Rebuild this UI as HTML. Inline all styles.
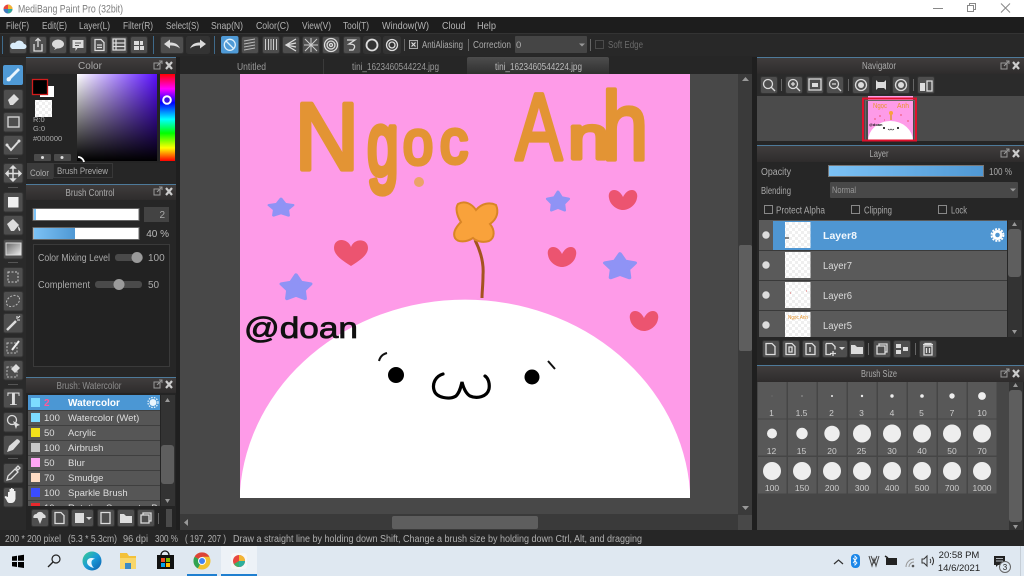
<!DOCTYPE html>
<html><head><meta charset="utf-8"><title>MediBang Paint Pro (32bit)</title>
<style>
html,body{margin:0;padding:0;background:#262626;width:1024px;height:576px;overflow:hidden}
svg{display:block}
text{font-family:"Liberation Sans",sans-serif;font-size:10.5px;fill:#b4b4b4}
.b{fill:#4e4e4e;stroke:#333;stroke-width:1}
.i{fill:#dcdcdc}
.s{fill:none;stroke:#dcdcdc;stroke-width:1.3}
.sep{fill:#555}
.t{fill:#a8a8a8;font-size:10px}
.h{fill:#aaa;font-size:10px;text-anchor:middle}
.n{font-size:9.5px;fill:#ddd}
.l{font-size:8.5px;fill:#ccc;text-anchor:middle}
.w{fill:#f0f0f0}
.st{font-size:10px;fill:#b0b0b0}
.tb{font-size:10px;fill:#222}
.art{font-size:100px;fill:#e39434;stroke:#e39434;stroke-width:7;stroke-linejoin:round;stroke-linecap:round}
.thin{stroke-width:4.5}
</style></head><body>
<svg width="1024" height="576" viewBox="0 0 1024 576" xmlns="http://www.w3.org/2000/svg">
<defs>
<linearGradient id="hd" x1="0" y1="0" x2="0" y2="1"><stop offset="0" stop-color="#403d3d"/><stop offset="1" stop-color="#2e2c2c"/></linearGradient>
<linearGradient id="tab" x1="0" y1="0" x2="0" y2="1"><stop offset="0" stop-color="#4d4d4d"/><stop offset="1" stop-color="#303030"/></linearGradient>
<linearGradient id="blue" x1="0" y1="0" x2="1" y2="0"><stop offset="0" stop-color="#7cc2f5"/><stop offset="1" stop-color="#4f98d4"/></linearGradient>
<linearGradient id="sq1" x1="0" y1="0" x2="1" y2="0"><stop offset="0" stop-color="#fff"/><stop offset="1" stop-color="#5a10ff"/></linearGradient>
<linearGradient id="sq2" x1="0" y1="0" x2="0" y2="1"><stop offset="0" stop-color="#000" stop-opacity="0"/><stop offset="1" stop-color="#000"/></linearGradient>
<linearGradient id="hue" x1="0" y1="0" x2="0" y2="1"><stop offset="0" stop-color="#f00"/><stop offset=".17" stop-color="#f0f"/><stop offset=".33" stop-color="#00f"/><stop offset=".52" stop-color="#0ff"/><stop offset=".68" stop-color="#0f0"/><stop offset=".85" stop-color="#ff0"/><stop offset="1" stop-color="#f00"/></linearGradient>
<linearGradient id="edge" x1="0" y1="0" x2="1" y2="1"><stop offset="0" stop-color="#3ccf8e"/><stop offset=".5" stop-color="#1a9bd8"/><stop offset="1" stop-color="#0c5cab"/></linearGradient>
<linearGradient id="grad" x1="0" y1="0" x2="1" y2="1"><stop offset="0" stop-color="#666"/><stop offset="1" stop-color="#eee"/></linearGradient>
<pattern id="chk" width="6" height="6" patternUnits="userSpaceOnUse"><rect width="3" height="3" fill="#efefef"/><rect x="3" y="3" width="3" height="3" fill="#efefef"/></pattern>
<polygon id="star" points="0,-10 3.200,-4.400 9.500,-3.100 5.200,1.700 5.900,8.100 0,5.500 -5.900,8.100 -5.200,1.700 -9.500,-3.100 -3.200,-4.400" fill="#8f93f5" stroke="#8f93f5" stroke-width="2.500" stroke-linejoin="round"/>
<path id="heart" d="M0 -3C-2 -7 -5 -10 -9 -10C-13 -10 -15 -6 -14 -2C-13 5 -6 10 0 10C6 10 13 5 14 -2C15 -6 13 -10 9 -10C5 -10 2 -7 0 -3Z" fill="#ec5470"/>
<g id="pi"><rect x="0" y="2" width="6" height="6" fill="none" stroke="#999"/><path d="M3 5L8 0M5 0h3v3" fill="none" stroke="#999"/><path d="M12 1l6 7M18 1l-6 7" stroke="#ccc" stroke-width="2.200"/></g>
<clipPath id="rowclip"><rect x="28" y="395" width="132" height="111"/></clipPath>
</defs>

<!-- base -->
<rect width="1024" height="576" fill="#262626"/>

<!-- title bar -->
<rect width="1024" height="17" fill="#fff"/>
<circle cx="8" cy="9" r="4.500" fill="#e8473f"/><path d="M8 4.500a4.500 4.500 0 0 1 4.500 4.500H8z" fill="#f2b632"/><path d="M8 9h4.500A4.500 4.500 0 0 1 8 13.500z" fill="#2fa8a0"/><path d="M8 9v4.500A4.500 4.500 0 0 1 3.500 9z" fill="#3b7bc0"/>
<text x="18" y="12.500" textLength="105" lengthAdjust="spacingAndGlyphs" style="font-size:11px;fill:#7d7d7d">MediBang Paint Pro (32bit)</text>
<path d="M933 8.500h10" stroke="#888"/><rect x="967.500" y="5.500" width="6" height="6" fill="none" stroke="#888"/><path d="M969.500 5.500v-2h6v6h-2" fill="none" stroke="#888"/><path d="M1001 3.500l9 9M1010 3.500l-9 9" stroke="#888"/>

<!-- menu -->
<rect y="17" width="1024" height="16" fill="#1d1d1d"/>
<text x="6" y="29" textLength="23" lengthAdjust="spacingAndGlyphs">File(F)</text><text x="42" y="29" textLength="25" lengthAdjust="spacingAndGlyphs">Edit(E)</text><text x="79" y="29" textLength="31" lengthAdjust="spacingAndGlyphs">Layer(L)</text><text x="123" y="29" textLength="30" lengthAdjust="spacingAndGlyphs">Filter(R)</text><text x="166" y="29" textLength="33" lengthAdjust="spacingAndGlyphs">Select(S)</text><text x="211" y="29" textLength="32" lengthAdjust="spacingAndGlyphs">Snap(N)</text><text x="256" y="29" textLength="33" lengthAdjust="spacingAndGlyphs">Color(C)</text><text x="302" y="29" textLength="29" lengthAdjust="spacingAndGlyphs">View(V)</text><text x="343" y="29" textLength="26" lengthAdjust="spacingAndGlyphs">Tool(T)</text><text x="382" y="29" textLength="47" lengthAdjust="spacingAndGlyphs">Window(W)</text><text x="442" y="29" textLength="23.500" lengthAdjust="spacingAndGlyphs">Cloud</text><text x="477" y="29" textLength="19" lengthAdjust="spacingAndGlyphs">Help</text>

<!-- toolbar -->
<rect y="33" width="1024" height="23" fill="#282828"/>
<rect y="33" width="1024" height="1" fill="#333"/>
<rect x="2" y="36" width="1" height="18" fill="#3f6a8a"/>
<rect class="b" x="9.500" y="36.500" width="17" height="17" rx="2"/><path d="M12 49h12a2.500 2.500 0 0 0 0-5 5 5 0 0 0-9-1 3 3 0 0 0-3 6z" fill="#d9ecfa"/>
<rect class="b" x="29.500" y="36.500" width="17" height="17" rx="2"/><path d="M34 44v7h8v-7M38 47v-8M35.500 41l2.500-2.500 2.500 2.500" class="s"/>
<rect class="b" x="49.500" y="36.500" width="17" height="17" rx="2"/><ellipse cx="58" cy="44" rx="6" ry="4.500" class="i"/><path d="M56 47l-2 3 4-2z" class="i"/>
<rect class="b" x="69.500" y="36.500" width="17" height="17" rx="2"/><path d="M72.500 40h11v8h-6l-2 3v-3h-3z" class="i"/><path d="M75 43h6M75 45.500h4" stroke="#555"/>
<rect class="b" x="90.500" y="36.500" width="17" height="17" rx="2"/><path d="M95 39.500h6l3 3v8h-9zM97 45h5M97 47.500h5" class="s"/>
<rect class="b" x="110.500" y="36.500" width="17" height="17" rx="2"/><path d="M113 39h12v11h-12zM113 43h12M113 46.500h12M116 39v11" class="s"/>
<rect class="b" x="130.500" y="36.500" width="17" height="17" rx="2"/><path d="M134 41h5v4h-5zM140 41h3v4h-3zM134 46h5v4h-5zM140 46h4v4h-4z" class="i"/>
<rect x="153" y="36" width="1" height="18" fill="#3f6a8a"/>
<rect class="b" x="160.500" y="36.500" width="23" height="17" rx="2"/><path d="M164 44l6-4.500v3c4 0 8 1 10 6-3-2.500-6-3-10-3v3z" class="i"/>
<rect class="b" x="186.500" y="36.500" width="23" height="17" rx="2" style="fill:#333"/><path d="M206 44l-6-4.500v3c-4 0-8 1-10 6 3-2.500 6-3 10-3v3z" class="i"/>
<rect x="214" y="36" width="1" height="18" fill="#3f6a8a"/>
<rect x="221" y="36" width="17.500" height="17.500" rx="2" fill="#4f9ad6"/><circle cx="229.800" cy="44.800" r="5.500" fill="none" stroke="#dff0fb" stroke-width="1.300"/><path d="M226 41l8 8" stroke="#dff0fb" stroke-width="1.300"/>
<rect class="b" x="241.500" y="36.500" width="17" height="17" rx="2"/><path d="M244 41l11-2M244 44l11-2M244 47l11-2M244 50l11-2" stroke="#bbb"/>
<rect class="b" x="262.500" y="36.500" width="17" height="17" rx="2"/><path d="M265.500 39v11M268.500 39v11M271 39v11M273.500 39v11M276.500 39v11" stroke="#ccc"/>
<rect class="b" x="282.500" y="36.500" width="17" height="17" rx="2"/><path d="M296 39l-10 6 10 6M296 43l-10 2 10 2" class="s"/>
<rect class="b" x="302.500" y="36.500" width="17" height="17" rx="2"/><path d="M305 39l12 12M317 39l-12 12M311 38v14M304 45h14" stroke="#ccc"/>
<rect class="b" x="322.500" y="36.500" width="17" height="17" rx="2"/><circle cx="331" cy="45" r="6.500" class="s"/><circle cx="331" cy="45" r="4" class="s"/><circle cx="331" cy="45" r="1.500" class="s"/>
<rect class="b" x="343.500" y="36.500" width="17" height="17" rx="2"/><path d="M347 40h8l-6 4c4 0 8 1 4 6h-4" class="s"/>
<rect class="b" x="363.500" y="36.500" width="17" height="17" rx="2" style="fill:#333"/><circle cx="372" cy="45" r="5.500" fill="none" stroke="#ddd" stroke-width="1.800"/>
<rect class="b" x="383.500" y="36.500" width="17" height="17" rx="2" style="fill:#333"/><circle cx="392" cy="45" r="5.500" class="s"/><circle cx="392" cy="45" r="3" class="s"/>
<rect x="404" y="39" width="1" height="12" fill="#666"/>
<rect x="409.500" y="40.500" width="8" height="8" fill="#3a3a3a" stroke="#aaa"/><path d="M411.500 42.500l4 4M415.500 42.500l-4 4" stroke="#ddd" stroke-width="1.200"/>
<text x="422" y="48" textLength="41" lengthAdjust="spacingAndGlyphs" style="font-size:10px;fill:#aaa">AntiAliasing</text>
<rect x="468" y="39" width="1" height="12" fill="#666"/>
<text x="473" y="48" textLength="38" lengthAdjust="spacingAndGlyphs" style="font-size:10px;fill:#aaa">Correction</text>
<rect x="515" y="36" width="72" height="17" rx="1" fill="#454545"/><text x="516" y="48" style="font-size:9.500px;fill:#aaa">0</text><path d="M579 43.500h6l-3 3z" fill="#999"/>
<rect x="590" y="39" width="1" height="12" fill="#666"/>
<rect x="595.500" y="40.500" width="8" height="8" fill="none" stroke="#4a4a4a"/>
<text x="608" y="48" textLength="35" lengthAdjust="spacingAndGlyphs" style="font-size:10px;fill:#6a6a6a">Soft Edge</text>

<!-- tab strip -->
<rect x="180" y="57" width="572" height="17" fill="#262626"/>
<rect x="323" y="59" width="1" height="15" fill="#3a3a3a"/>
<text x="237" y="70" textLength="29" lengthAdjust="spacingAndGlyphs" style="font-size:10px;fill:#999">Untitled</text>
<text x="352" y="70" textLength="87" lengthAdjust="spacingAndGlyphs" style="font-size:10px;fill:#999">tini_1623460544224.jpg</text>
<path d="M467 74V59q0-2 2-2h138q2 0 2 2v15z" fill="url(#tab)"/>
<text x="495" y="70" textLength="87" lengthAdjust="spacingAndGlyphs" style="font-size:10px;fill:#bbb">tini_1623460544224.jpg</text>

<!-- canvas area -->
<rect x="180" y="74" width="572" height="456" fill="#484848"/>
<rect x="240" y="74" width="450" height="424" fill="#fe9be8"/>
<g>
<title>Ngọc Anh @doan</title>
<path d="M240 498V491A225.500 205 0 0 1 690 491V498Z" fill="#fff"/>
<text class="art thin" transform="translate(294.700 169.500) scale(.89 .96)">N</text>
<text class="art" transform="translate(367.300 175) scale(.56 .9)">g</text>
<text class="art" transform="translate(403 164) scale(.54 .62)">o</text>
<text class="art" transform="translate(440 163) scale(.56 .62)">c</text>
<text class="art thin" transform="translate(515.500 159.500) scale(.7 .945)">A</text>
<text class="art" transform="translate(568.300 158.500) scale(.74 .6)">n</text>
<text class="art thin" transform="translate(602 159.500) scale(.83 .965)">h</text>
<circle cx="419" cy="182" r="5" fill="#eba368"/>
<use href="#star" transform="translate(281 208) scale(1.250 .92)"/>
<use href="#star" transform="translate(296 288) scale(1.530 1.300)"/>
<use href="#star" transform="translate(558 202) scale(1.120 1.020)"/>
<use href="#star" transform="translate(620 267) scale(1.580 1.310)"/>
<path d="M351 247C348 238 334 237 334 248C334 256 345 262 351 266C357 262 368 256 368 248C368 238 354 238 351 247Z" fill="#ec5470"/>
<use href="#heart" transform="translate(623 200)"/>
<use href="#heart" transform="translate(562 257)"/>
<use href="#heart" transform="translate(644 321)"/>
<path d="M475 240C480 250 484 262 483 275C483 285 482 292 482 298" fill="none" stroke="#a4531f" stroke-width="3"/>
<path d="M458 204C465 200 472 204 476 210C482 203 490 202 496 205C499 212 497 219 490 224C495 230 495 238 489 241C482 243 476 241 473 238C467 242 458 243 455 238C452 232 457 226 461 222C457 216 455 208 458 204Z" fill="#f9a23b" stroke="#d98526" stroke-width="2"/>
<text x="244" y="338" textLength="114" lengthAdjust="spacingAndGlyphs" style="font-size:30px;fill:#111;stroke:#111;stroke-width:.8">@doan</text>
<circle cx="396" cy="375" r="8" fill="#000"/><circle cx="532" cy="377" r="7.500" fill="#000"/>
<path d="M379 361C380 357 383 354 387 353M548 361L555 369" fill="none" stroke="#111" stroke-width="2"/>
<path d="M443 374C436 376 432 383 434 390C436 398 450 400 456 396C460 392 461 386 462 382C463 386 465 393 470 396C477 399 487 397 489 389C490 383 488 378 485 376" fill="none" stroke="#000" stroke-width="3.200" stroke-linecap="round"/>
</g>

<!-- canvas scrollbars -->
<rect x="738" y="74" width="14" height="441" fill="#3a3a3a"/>
<rect x="739" y="245" width="13" height="106" rx="2" fill="#5e5e5e"/>
<path d="M742 81l3.500-4 3.500 4z" fill="#999"/><path d="M742 506l3.500 4 3.500-4z" fill="#999"/>
<rect x="180" y="514" width="558" height="16" fill="#3a3a3a"/>
<rect x="392" y="516" width="146" height="13" rx="2" fill="#5e5e5e"/>
<path d="M188 519l-4 3.500 4 3.500z" fill="#999"/>
<rect x="176" y="57" width="4" height="473" fill="#1f1f1f"/>
<rect x="752" y="57" width="5" height="473" fill="#1f1f1f"/>

<!-- left tools -->
<rect x="0" y="57" width="26" height="473" fill="#2a2a2a"/>
<rect x="3" y="65" width="20" height="20" rx="2" fill="#4f9ad6"/><path d="M7 81c-1-2 0-4 2-4l9-9 2 2-9 9c0 2-2 3-4 2z" fill="#eaf5fd"/>
<rect class="b" x="3.500" y="89.500" width="19.500" height="19.500" rx="2"/><path d="M8 100l6-6 5 5-6 6h-3z" class="i"/>
<rect class="b" x="3.500" y="112.500" width="19.500" height="19.500" rx="2"/><rect x="8" y="117" width="11" height="10" class="s"/>
<rect class="b" x="3.500" y="135.500" width="19.500" height="19.500" rx="2"/><path d="M7 145l4 5 8-9" class="s" style="stroke-width:2"/><circle cx="7" cy="145" r="1.500" class="i"/><circle cx="19" cy="141" r="1.500" class="i"/>
<rect class="sep" x="8" y="158" width="10" height="1"/>
<rect class="b" x="3.500" y="163.500" width="19.500" height="19.500" rx="2"/><path d="M13 166v15M6 173.500h15M13 166l-2 2h4zM13 181l-2-2h4zM6 173.500l2-2v4zM21 173.500l-2-2v4z" stroke="#ddd" stroke-width="1.500" fill="#ddd"/>
<rect class="sep" x="8" y="187" width="10" height="1"/>
<rect class="b" x="3.500" y="192.500" width="19.500" height="19.500" rx="2"/><rect x="8" y="197" width="10.500" height="10.500" class="w"/>
<rect class="b" x="3.500" y="215.500" width="19.500" height="19.500" rx="2"/><path d="M7 224l6-5 6 6-5 6h-3z" class="i"/><path d="M18 226q3 3 2 5-2 0-2-5" class="i"/>
<rect class="b" x="3.500" y="239.500" width="19.500" height="19.500" rx="2"/><rect x="6" y="243" width="15" height="12" fill="url(#grad)" stroke="#ddd"/>
<rect class="sep" x="8" y="262" width="10" height="1"/>
<rect class="b" x="3.500" y="267.500" width="19.500" height="19.500" rx="2"/><rect x="8" y="272" width="10" height="10" fill="none" stroke="#ccc" stroke-dasharray="2 1.500"/>
<rect class="b" x="3.500" y="291.500" width="19.500" height="19.500" rx="2"/><ellipse cx="13" cy="301" rx="7" ry="5" transform="rotate(-30 13 301)" fill="none" stroke="#bbb" stroke-dasharray="2 1.500"/>
<rect class="b" x="3.500" y="313.500" width="19.500" height="19.500" rx="2"/><path d="M7 330l9-9" stroke="#ddd" stroke-width="2.500"/><path d="M17 316v3M20 320h-3M20 316l-2 2" stroke="#eee"/>
<rect class="b" x="3.500" y="337.500" width="19.500" height="19.500" rx="2"/><rect x="7" y="343" width="10" height="10" fill="none" stroke="#bbb" stroke-dasharray="2 1.500"/><path d="M12 350l7-9" stroke="#eee" stroke-width="2"/>
<rect class="b" x="3.500" y="360.500" width="19.500" height="19.500" rx="2"/><rect x="7" y="367" width="10" height="10" fill="none" stroke="#bbb" stroke-dasharray="2 1.500"/><path d="M11 369l5-5 4 4-5 5z" class="i"/>
<rect class="sep" x="8" y="384" width="10" height="1"/>
<rect class="b" x="3.500" y="388.500" width="19.500" height="19.500" rx="2"/><text x="13.500" y="405" style="font-family:'Liberation Serif',serif;font-size:19px;font-weight:bold;fill:#ddd;text-anchor:middle">T</text>
<rect class="b" x="3.500" y="412.500" width="19.500" height="19.500" rx="2"/><circle cx="12" cy="420" r="4.500" class="s"/><path d="M13 421l7 4-3 1-1 3z" class="i"/>
<rect class="b" x="3.500" y="435.500" width="19.500" height="19.500" rx="2"/><path d="M7 452l2-6 8-7q3 1 3 3l-7 8z" class="i"/>
<rect class="sep" x="8" y="458" width="10" height="1"/>
<rect class="b" x="3.500" y="463.500" width="19.500" height="19.500" rx="2"/><path d="M7 480l1-4 7-7 3 3-7 7zM16 468l2-2 2 2-2 2z" class="s"/>
<rect class="b" x="3.500" y="487.500" width="19.500" height="19.500" rx="2"/><path d="M8 497v-5h1.500v3-6h1.500v6-7h1.500v7-6h1.500v6-4h1.500v8q-1 4-4 4h-2q-2 0-3-3l-2-3 1-1z" fill="#eee"/>

<!-- Color panel -->
<rect x="26" y="57" width="150" height="120" fill="#242424"/>
<rect x="26" y="57" width="150" height="1" fill="#4e7a9a"/>
<rect x="26" y="58" width="150" height="16" fill="url(#hd)"/>
<text class="h" x="90" y="69">Color</text>
<use href="#pi" x="154" y="61"/>
<rect x="40" y="86" width="14" height="11" fill="#fff"/>
<rect x="32.500" y="79.500" width="15" height="15" fill="#000" stroke="#d01c1c" stroke-width="1.300"/>
<rect x="35" y="100" width="17" height="17" fill="#fff"/><rect x="35" y="100" width="17" height="17" fill="url(#chk)"/>
<text x="33" y="122" style="font-size:7.500px;fill:#aaa">R:0</text>
<text x="33" y="131" style="font-size:7.500px;fill:#aaa">G:0</text>
<text x="33" y="141" style="font-size:7.500px;fill:#aaa">#000000</text>
<rect x="77" y="74" width="80" height="87" fill="url(#sq1)"/><rect x="77" y="74" width="80" height="87" fill="url(#sq2)"/>
<rect x="160" y="74" width="15" height="87" fill="url(#hue)"/>
<circle cx="167" cy="100" r="3.800" fill="#3a14e0" stroke="#fff" stroke-width="2"/>
<rect x="34" y="154" width="17" height="7" rx="1" fill="#4a4a4a"/><rect x="54" y="154" width="17" height="7" rx="1" fill="#4a4a4a"/>
<circle cx="42.500" cy="157.500" r="1.500" fill="#ddd"/><circle cx="62" cy="157.500" r="1.500" fill="#ddd"/>
<path d="M78 157a6 6 0 0 1 6 5" fill="none" stroke="#fff" stroke-width="1.800"/>
<rect x="26" y="163" width="150" height="14" fill="#262626"/>
<rect x="27" y="163" width="26" height="16" fill="#3b3b3b"/>
<rect x="53.500" y="163.500" width="59" height="14" fill="#262626" stroke="#383838"/>
<text class="n" x="30" y="176" textLength="19" lengthAdjust="spacingAndGlyphs" style="fill:#aaa">Color</text>
<text class="n" x="57" y="174" textLength="51" lengthAdjust="spacingAndGlyphs" style="fill:#aaa;font-size:9.500px">Brush Preview</text>

<!-- Brush Control -->
<rect x="26" y="184" width="150" height="192" fill="#262626"/>
<rect x="26" y="184" width="150" height="1" fill="#4e7a9a"/>
<rect x="26" y="185" width="150" height="15" fill="url(#hd)"/>
<text class="h" x="90" y="196" textLength="49" lengthAdjust="spacingAndGlyphs">Brush Control</text>
<use href="#pi" x="154" y="187"/>
<rect x="33" y="208.500" width="106" height="12" fill="#fff" stroke="#666"/><rect x="34" y="209" width="2" height="11" fill="#7cc2f5"/>
<rect x="144" y="207" width="25" height="15" fill="#434343"/><text x="165" y="218" style="font-size:10px;fill:#aaa;text-anchor:end">2</text>
<rect x="33" y="227.500" width="106" height="12" fill="#fff" stroke="#666"/><rect x="34" y="228" width="41" height="11" fill="url(#blue)"/>
<text x="169" y="237" style="font-size:10px;fill:#bbb;text-anchor:end">40 %</text>
<rect x="33.500" y="244.500" width="136" height="122" fill="#222" stroke="#3a3a3a"/>
<text x="38" y="261" textLength="72" lengthAdjust="spacingAndGlyphs" style="font-size:10px;fill:#aaa">Color Mixing Level</text>
<rect x="115" y="254" width="28" height="7" rx="3" fill="#4a4a4a"/><circle cx="137" cy="257.500" r="5.500" fill="#9a9a9a"/>
<text x="148" y="261" style="font-size:10px;fill:#aaa">100</text>
<text x="38" y="288" textLength="52" lengthAdjust="spacingAndGlyphs" style="font-size:10px;fill:#aaa">Complement</text>
<rect x="95" y="281" width="47" height="7" rx="3" fill="#4a4a4a"/><circle cx="119" cy="284.500" r="5.500" fill="#9a9a9a"/>
<text x="148" y="288" style="font-size:10px;fill:#aaa">50</text>

<!-- Brush list -->
<rect x="26" y="377" width="150" height="153" fill="#242424"/>
<rect x="26" y="377" width="150" height="1" fill="#4e7a9a"/>
<rect x="26" y="378" width="150" height="15" fill="url(#hd)"/>
<text class="h" x="89" y="389" textLength="65" lengthAdjust="spacingAndGlyphs" style="fill:#8e8e8e">Brush: Watercolor</text>
<use href="#pi" x="154" y="380"/>
<rect x="28" y="395" width="132" height="111" fill="#565656"/>
<rect x="28" y="395" width="132" height="15" fill="#4b97d4"/>
<path d="M28 410.500h132M28 425.500h132M28 440.500h132M28 455.500h132M28 470.500h132M28 485.500h132M28 500.500h132" stroke="#3f3f3f"/>
<rect x="31" y="398" width="9" height="9" fill="#7ddcff"/><rect x="31" y="413" width="9" height="9" fill="#7ddcff"/><rect x="31" y="428" width="9" height="9" fill="#f2e21a"/><rect x="31" y="443" width="9" height="9" fill="#c9c9c9"/><rect x="31" y="458" width="9" height="9" fill="#ffa6f5"/><rect x="31" y="473" width="9" height="9" fill="#ffdcc4"/><rect x="31" y="488" width="9" height="9" fill="#3a4cff"/><rect x="31" y="503" width="9" height="3" fill="#e8282c"/>
<text x="44" y="406" style="font-size:10px;fill:#ff5a9a;font-weight:bold">2</text>
<text x="68" y="406" style="font-size:10px;fill:#fff;font-weight:bold">Watercolor</text>
<text class="n" x="44" y="421">100</text><text class="n" x="68" y="421">Watercolor (Wet)</text>
<text class="n" x="44" y="436">50</text><text class="n" x="68" y="436">Acrylic</text>
<text class="n" x="44" y="451">100</text><text class="n" x="68" y="451">Airbrush</text>
<text class="n" x="44" y="466">50</text><text class="n" x="68" y="466">Blur</text>
<text class="n" x="44" y="481">70</text><text class="n" x="68" y="481">Smudge</text>
<text class="n" x="44" y="496">100</text><text class="n" x="68" y="496">Sparkle Brush</text>
<g clip-path="url(#rowclip)"><text class="n" x="44" y="511">10</text><text class="n" x="68" y="511">Rotation Symmetry Br</text></g>
<circle cx="153" cy="402.500" r="3.500" fill="#eaf5fd"/><circle cx="153" cy="402.500" r="5" fill="none" stroke="#eaf5fd" stroke-width="1.200" stroke-dasharray="1.500 1.200"/>
<rect x="161" y="395" width="14" height="111" fill="#333"/><rect x="161" y="445" width="13" height="39" rx="3" fill="#5e5e5e"/>
<path d="M165 402l2.500-4 2.500 4z" fill="#999"/><path d="M165 499l2.500 4 2.500-4z" fill="#999"/>
<rect class="b" x="31.500" y="509.500" width="17" height="17" rx="2"/><path d="M33.500 518a3 3 0 0 1 3-4 4 4 0 0 1 7 0 3 3 0 0 1 2 4zM37.500 518h5l-2.500 6z" class="i"/>
<rect class="b" x="51.500" y="509.500" width="17" height="17" rx="2"/><path d="M55 512.500h6l3 3v8h-9z" class="s"/>
<rect class="b" x="71.500" y="509.500" width="22" height="17" rx="2"/><rect x="75" y="513" width="9" height="10" class="i"/><path d="M86 517h6l-3 3z" class="i"/>
<rect class="b" x="97.500" y="509.500" width="17" height="17" rx="2"/><path d="M101 512.500h9v11h-9z" class="s"/>
<rect class="b" x="117.500" y="509.500" width="17" height="17" rx="2"/><path d="M120 514h4l2 2h6v7h-12z" class="i"/>
<rect class="b" x="137.500" y="509.500" width="17" height="17" rx="2"/><path d="M141 515h8v8h-8zM143 515v-2h8v8h-2" class="s"/>
<rect x="158" y="513" width="1" height="11" fill="#666"/>
<rect x="166" y="509" width="6" height="18" fill="#4a4a4a"/>

<!-- Navigator -->
<rect x="757" y="57" width="267" height="1" fill="#4e7a9a"/>
<rect x="757" y="58" width="267" height="16" fill="url(#hd)"/>
<text class="h" x="879" y="69" textLength="34" lengthAdjust="spacingAndGlyphs">Navigator</text>
<use href="#pi" x="1001" y="61"/>
<rect x="757" y="74" width="267" height="22" fill="#2b2b2b"/>
<rect class="b" x="760.500" y="76.500" width="17" height="17" rx="2"/><circle cx="768" cy="84" r="4.500" class="s"/><path d="M771 87l4 4" class="s"/>
<rect x="781" y="79" width="1" height="12" fill="#666"/>
<rect class="b" x="785.500" y="76.500" width="17" height="17" rx="2"/><circle cx="793" cy="84" r="4.500" class="s"/><path d="M796 87l4 4M791 84h4M793 82v4" class="s"/>
<rect class="b" x="806.500" y="76.500" width="17" height="17" rx="2"/><path d="M809 79h12v11h-12z" class="s"/><path d="M812 83h6v4h-6z" class="i"/>
<rect class="b" x="826.500" y="76.500" width="17" height="17" rx="2"/><circle cx="834" cy="84" r="4.500" class="s"/><path d="M837 87l4 4M832 84h4" class="s"/>
<rect x="848" y="79" width="1" height="12" fill="#666"/>
<rect class="b" x="852.500" y="76.500" width="17" height="17" rx="2"/><circle cx="861" cy="85" r="5.500" class="s"/><circle cx="861" cy="85" r="3" class="i"/>
<rect class="b" x="872.500" y="76.500" width="17" height="17" rx="2" style="fill:#333"/><path d="M876 80l2 2h6l2-2v10l-2-2h-6l-2 2z" class="i"/>
<rect class="b" x="892.500" y="76.500" width="17" height="17" rx="2"/><circle cx="901" cy="85" r="5.500" class="s"/><circle cx="901" cy="85" r="3" class="i"/>
<rect x="913" y="79" width="1" height="12" fill="#666"/>
<rect class="b" x="917.500" y="76.500" width="17" height="17" rx="2"/><path d="M920 83h5v8h-5z" class="i"/><path d="M927 81h5v10h-5z" class="s"/>
<rect x="757" y="96" width="267" height="45" fill="#4b4b4b"/>
<rect x="868" y="96" width="45" height="45" fill="#fe9be8"/>
<path d="M868 141A22.500 20 0 0 1 913 141Z" fill="#fff"/>
<text x="873" y="108" textLength="14" lengthAdjust="spacingAndGlyphs" style="font-size:7px;fill:#e8962f">Ngọc</text><text x="897" y="108" textLength="12" lengthAdjust="spacingAndGlyphs" style="font-size:7px;fill:#e8962f">Anh</text>
<path d="M891 112v8" stroke="#e39434" stroke-width="1.500"/><circle cx="891" cy="113" r="2" fill="#f9a23b"/>
<path d="M879 116h2M900 115h2M874 119h2M907 121h2M884 120h1" stroke="#ec5470"/>
<text x="869" y="126" style="font-size:4px;fill:#111;font-weight:bold">@doan</text>
<circle cx="884" cy="128" r="1" fill="#000"/><circle cx="898" cy="128" r="1" fill="#000"/><path d="M888 129q2 2 3 0 1 2 3 0" fill="none" stroke="#222" stroke-width=".6"/>
<rect x="865.500" y="100.500" width="49" height="40" fill="none" stroke="#666"/>
<rect x="863" y="98.500" width="53" height="42" fill="none" stroke="#e0102c" stroke-width="2"/>

<!-- Layer -->
<rect x="757" y="145" width="267" height="1" fill="#4e7a9a"/>
<rect x="757" y="146" width="267" height="16" fill="url(#hd)"/>
<text class="h" x="879" y="157" textLength="19" lengthAdjust="spacingAndGlyphs">Layer</text>
<use href="#pi" x="1001" y="149"/>
<text class="t" x="761" y="175" textLength="30" lengthAdjust="spacingAndGlyphs">Opacity</text>
<rect x="828.500" y="165.500" width="155" height="11" fill="url(#blue)" stroke="#777"/>
<text class="t" x="989" y="175" textLength="23" lengthAdjust="spacingAndGlyphs">100 %</text>
<text class="t" x="761" y="194" textLength="30" lengthAdjust="spacingAndGlyphs">Blending</text>
<rect x="830" y="182" width="188" height="16" rx="1" fill="#484848"/>
<text class="t" x="832" y="193" textLength="24" lengthAdjust="spacingAndGlyphs" style="font-size:9.500px;fill:#999">Normal</text><path d="M1010 188.500h6l-3 3z" fill="#999"/>
<rect x="764.500" y="205.500" width="8" height="8" fill="none" stroke="#888"/><text class="t" x="776" y="213.500" textLength="49" lengthAdjust="spacingAndGlyphs">Protect Alpha</text>
<rect x="851.500" y="205.500" width="8" height="8" fill="none" stroke="#888"/><text class="t" x="864" y="213.500" textLength="28" lengthAdjust="spacingAndGlyphs">Clipping</text>
<rect x="938.500" y="205.500" width="8" height="8" fill="none" stroke="#888"/><text class="t" x="951" y="213.500" textLength="16" lengthAdjust="spacingAndGlyphs">Lock</text>
<rect x="759" y="220" width="248" height="117" fill="#5a5a5a"/>
<rect x="773" y="221" width="234" height="29" fill="#4f96d2"/>
<path d="M759 250.500h248M759 280.500h248M759 310.500h248" stroke="#3a3a3a"/>
<circle cx="766" cy="235" r="3.700" fill="#ddd"/><circle cx="766" cy="265" r="3.700" fill="#ddd"/><circle cx="766" cy="295" r="3.700" fill="#ddd"/><circle cx="766" cy="325" r="3.700" fill="#ddd"/>
<rect x="785" y="222" width="25.500" height="26" fill="#fff"/><rect x="785" y="222" width="25.500" height="26" fill="url(#chk)"/><path d="M785 238h4" stroke="#333" stroke-width="1.200"/>
<rect x="785" y="252" width="25.500" height="26" fill="#fff"/><rect x="785" y="252" width="25.500" height="26" fill="url(#chk)"/>
<rect x="785" y="282" width="25.500" height="26" fill="#fff"/><rect x="785" y="282" width="25.500" height="26" fill="url(#chk)"/><path d="M790 293h1M806 291h1" stroke="#d66"/>
<rect x="785" y="312" width="25.500" height="25" fill="#fff"/><rect x="785" y="312" width="25.500" height="25" fill="url(#chk)"/><text x="788" y="319" textLength="20" lengthAdjust="spacingAndGlyphs" style="font-size:5px;fill:#e8962f">Ngọc Anh</text>
<text x="823" y="239" textLength="34" lengthAdjust="spacingAndGlyphs" style="font-size:10.500px;font-weight:bold;fill:#f2f8fd">Layer8</text>
<text x="823" y="269" textLength="29" lengthAdjust="spacingAndGlyphs" style="font-size:10.500px;fill:#ddd">Layer7</text>
<text x="823" y="299" textLength="29" lengthAdjust="spacingAndGlyphs" style="font-size:10.500px;fill:#ddd">Layer6</text>
<text x="823" y="329" textLength="29" lengthAdjust="spacingAndGlyphs" style="font-size:10.500px;fill:#ddd">Layer5</text>
<circle cx="997.500" cy="235" r="3.700" fill="none" stroke="#fff" stroke-width="2.800"/><circle cx="997.500" cy="235" r="6" fill="none" stroke="#fff" stroke-width="1.800" stroke-dasharray="2 1.200"/>
<rect x="1008" y="220" width="14" height="117" fill="#333"/><rect x="1008" y="229" width="13" height="48" rx="3" fill="#5e5e5e"/>
<path d="M1012 226l2.500-4 2.500 4z" fill="#999"/><path d="M1012 330l2.500 4 2.500-4z" fill="#999"/>
<rect class="b" x="762.500" y="340.500" width="17" height="17" rx="2"/><path d="M766 343.500h6l3 3v8h-9z" class="s"/>
<rect class="b" x="782.500" y="340.500" width="17" height="17" rx="2"/><path d="M786 343.500h6l3 3v8h-9zM789 347h3v5h-3z" class="s"/>
<rect class="b" x="802.500" y="340.500" width="17" height="17" rx="2"/><path d="M806 343.500h6l3 3v8h-9zM810 347v5" class="s"/>
<rect class="b" x="822.500" y="340.500" width="25" height="17" rx="2"/><path d="M826 343.500h6l3 3v3M826 343.500v11h5M833 351v5M830 353.500h6" class="s"/><path d="M839 347h6l-3 3z" class="i"/>
<rect class="b" x="849.500" y="340.500" width="15" height="17" rx="2"/><path d="M851 345h4l2 2h6v7h-12z" class="i"/>
<rect x="868" y="343" width="1" height="12" fill="#666"/>
<rect class="b" x="873.500" y="340.500" width="17" height="17" rx="2"/><path d="M877 346h8v8h-8zM879 346v-2h8v8h-2" class="s"/>
<rect class="b" x="893.500" y="340.500" width="17" height="17" rx="2"/><path d="M896 344h5v4h-5zM896 350h5v4h-5zM903 347h5v4h-5z" class="i"/>
<rect x="915" y="343" width="1" height="12" fill="#666"/>
<rect class="b" x="919.500" y="340.500" width="17" height="17" rx="2"/><path d="M923 344.500h10M925 344.500v-1h6v1M924 346h8v9h-8zM926.500 348v5M929.500 348v5" class="s"/>

<!-- Brush Size -->
<rect x="757" y="365" width="267" height="1" fill="#4e7a9a"/>
<rect x="757" y="366" width="267" height="16" fill="url(#hd)"/>
<text class="h" x="879" y="377" textLength="36" lengthAdjust="spacingAndGlyphs">Brush Size</text>
<use href="#pi" x="1001" y="369"/>
<rect x="757" y="382" width="252" height="149" fill="#464646"/>
<g fill="#585858">
<rect x="758" y="382" width="28.500" height="36.500"/><rect x="788" y="382" width="28.500" height="36.500"/><rect x="818" y="382" width="28.500" height="36.500"/><rect x="848" y="382" width="28.500" height="36.500"/><rect x="878" y="382" width="28.500" height="36.500"/><rect x="908" y="382" width="28.500" height="36.500"/><rect x="938" y="382" width="28.500" height="36.500"/><rect x="968" y="382" width="28.500" height="36.500"/>
<rect x="758" y="419.500" width="28.500" height="36"/><rect x="788" y="419.500" width="28.500" height="36"/><rect x="818" y="419.500" width="28.500" height="36"/><rect x="848" y="419.500" width="28.500" height="36"/><rect x="878" y="419.500" width="28.500" height="36"/><rect x="908" y="419.500" width="28.500" height="36"/><rect x="938" y="419.500" width="28.500" height="36"/><rect x="968" y="419.500" width="28.500" height="36"/>
<rect x="758" y="457" width="28.500" height="36.500"/><rect x="788" y="457" width="28.500" height="36.500"/><rect x="818" y="457" width="28.500" height="36.500"/><rect x="848" y="457" width="28.500" height="36.500"/><rect x="878" y="457" width="28.500" height="36.500"/><rect x="908" y="457" width="28.500" height="36.500"/><rect x="938" y="457" width="28.500" height="36.500"/><rect x="968" y="457" width="28.500" height="36.500"/>
</g>
<g fill="#eee">
<circle cx="772" cy="396" r=".4" opacity=".5"/><circle cx="802" cy="396" r=".6" opacity=".7"/><circle cx="832" cy="396" r="1"/><circle cx="862" cy="396" r="1.200"/><circle cx="892" cy="396" r="1.700"/><circle cx="922" cy="396" r="1.800"/><circle cx="952" cy="396" r="2.700"/><circle cx="982" cy="396" r="3.900"/>
<circle cx="772" cy="433.500" r="5"/><circle cx="802" cy="433.500" r="5.700"/><circle cx="832" cy="433.500" r="7.700"/><circle cx="862" cy="433.500" r="9"/><circle cx="892" cy="433.500" r="9"/><circle cx="922" cy="433.500" r="9"/><circle cx="952" cy="433.500" r="9"/><circle cx="982" cy="433.500" r="9"/>
<circle cx="772" cy="471" r="9"/><circle cx="802" cy="471" r="9"/><circle cx="832" cy="471" r="9"/><circle cx="862" cy="471" r="9"/><circle cx="892" cy="471" r="9"/><circle cx="922" cy="471" r="9"/><circle cx="952" cy="471" r="9"/><circle cx="982" cy="471" r="9"/>
</g>
<text class="l" x="771.500" y="416">1</text><text class="l" x="801.500" y="416">1.5</text><text class="l" x="831.500" y="416">2</text><text class="l" x="861.500" y="416">3</text><text class="l" x="892" y="416">4</text><text class="l" x="921.500" y="416">5</text><text class="l" x="952" y="416">7</text><text class="l" x="982" y="416">10</text>
<text class="l" x="771.500" y="454">12</text><text class="l" x="801.500" y="454">15</text><text class="l" x="832" y="454">20</text><text class="l" x="861.500" y="454">25</text><text class="l" x="892" y="454">30</text><text class="l" x="922" y="454">40</text><text class="l" x="952" y="454">50</text><text class="l" x="982" y="454">70</text>
<text class="l" x="772" y="491">100</text><text class="l" x="802" y="491">150</text><text class="l" x="832" y="491">200</text><text class="l" x="862" y="491">300</text><text class="l" x="892" y="491">400</text><text class="l" x="922" y="491">500</text><text class="l" x="952" y="491">700</text><text class="l" x="982" y="491">1000</text>
<rect x="1009" y="382" width="14" height="149" fill="#333"/><rect x="1009" y="390" width="13" height="132" rx="3" fill="#5e5e5e"/>
<path d="M1013 387l2.500-4 2.500 4z" fill="#999"/><path d="M1013 525l2.500 4 2.500-4z" fill="#999"/>

<!-- status -->
<rect y="530" width="1024" height="16" fill="#262626"/>
<text class="st" x="5" y="542" textLength="56" lengthAdjust="spacingAndGlyphs">200 * 200 pixel</text><text class="st" x="68" y="542" textLength="49" lengthAdjust="spacingAndGlyphs">(5.3 * 5.3cm)</text><text class="st" x="123" y="542" textLength="25" lengthAdjust="spacingAndGlyphs">96 dpi</text><text class="st" x="155" y="542" textLength="23" lengthAdjust="spacingAndGlyphs">300 %</text><text class="st" x="185" y="542" textLength="41" lengthAdjust="spacingAndGlyphs">( 197, 207 )</text>
<text class="st" x="233" y="542" textLength="409" lengthAdjust="spacingAndGlyphs">Draw a straight line by holding down Shift, Change a brush size by holding down Ctrl, Alt, and dragging</text>

<!-- taskbar -->
<rect y="546" width="1024" height="30" fill="#dfe8f1"/>
<path d="M12 556.500l5-.7v5h-5zM18 555.600l6-.9v6h-6zM12 562h5v5l-5-.7zM18 562h6v6l-6-.9z" fill="#000"/>
<circle cx="56" cy="559" r="4" fill="none" stroke="#222" stroke-width="1.200"/><path d="M53 562l-5 5" stroke="#222" stroke-width="1.300"/>
<circle cx="92" cy="561" r="9.500" fill="url(#edge)"/><path d="M87 562c0-4 5-5 8-3-4 0-5 5-1 9-4-1-7-3-7-6z" fill="#e8f6ff"/>
<path d="M120 553h7l2 3h7v4h-16z" fill="#f3c13a"/><path d="M120 558h16v11h-16z" fill="#f8d66a"/><path d="M125 563h6v6h-6z" fill="#3c8bc6"/>
<path d="M161 555a4 4 0 0 1 8 0" fill="none" stroke="#111" stroke-width="1.300"/><rect x="157" y="555" width="17" height="14" fill="#111"/><rect x="161" y="558" width="4" height="4" fill="#f25022"/><rect x="166" y="558" width="4" height="4" fill="#7fba00"/><rect x="161" y="563" width="4" height="4" fill="#00a4ef"/><rect x="166" y="563" width="4" height="4" fill="#ffb900"/>
<circle cx="202" cy="561" r="8.500" fill="#f2c230"/><path d="M202 561l-7.400-4.300A8.500 8.500 0 0 1 209.400 556.800H202z" fill="#dd4437"/><path d="M202 561l-4.200 7.400A8.500 8.500 0 0 1 194.600 556.700z" fill="#31a352"/><circle cx="202" cy="561" r="4" fill="#fff"/><circle cx="202" cy="561" r="3" fill="#4285f4"/>
<rect x="187" y="574" width="30" height="2" fill="#1f7fd0"/>
<rect x="221" y="546" width="36" height="30" fill="#edf2f7"/><rect x="221" y="574" width="36" height="2" fill="#1f7fd0"/>
<rect x="231" y="553" width="16" height="16" rx="3" fill="#f7f7f7"/><circle cx="239" cy="561" r="6" fill="#e8473f"/><path d="M239 555a6 6 0 0 1 6 6h-6z" fill="#f2b632"/><path d="M239 561h6a6 6 0 0 1-6 6z" fill="#2fb09c"/><path d="M239 561v6a6 6 0 0 1-5-3z" fill="#3bb06a"/>
<path d="M834 564l4.500-4 4.500 4" fill="none" stroke="#333" stroke-width="1.200"/>
<rect x="851" y="554" width="9" height="14" rx="4" fill="#1a86e8"/><path d="M853 558l4 5-2 2v-9l2 2-4 5" fill="none" stroke="#fff" stroke-width=".8"/>
<path d="M869 556l3 10 2-7 2 7 3-10M871 556l3 7 3-7" fill="none" stroke="#444"/>
<rect x="886" y="558" width="11" height="7" fill="#222"/><path d="M885 556l3 2" stroke="#222" stroke-width="1.500"/>
<path d="M906 567a8 8 0 0 1 8-8M909 567a5 5 0 0 1 5-5" fill="none" stroke="#999"/><circle cx="913" cy="566" r="1.300" fill="#555"/>
<path d="M922 559h2l3-3v10l-3-3h-2zM930 559a3 3 0 0 1 0 4M932 557a6 6 0 0 1 0 8" fill="none" stroke="#333"/>
<text class="tb" x="959" y="558" text-anchor="middle" style="font-size:9.500px">20:58 PM</text>
<text class="tb" x="959" y="571" text-anchor="middle" style="font-size:9.500px">14/6/2021</text>
<path d="M994 556h11v9h-7l-2 2v-2h-2z" fill="#222"/><path d="M996 558.500h7M996 561h7" stroke="#dfe8f1" stroke-width=".8"/>
<circle cx="1005" cy="567" r="5.500" fill="#dfe8f1" stroke="#666"/><text x="1005" y="570" style="font-size:8px;fill:#222;text-anchor:middle">3</text>
<rect x="1020" y="546" width="1" height="30" fill="#c6ced6"/>
</svg>
</body></html>
